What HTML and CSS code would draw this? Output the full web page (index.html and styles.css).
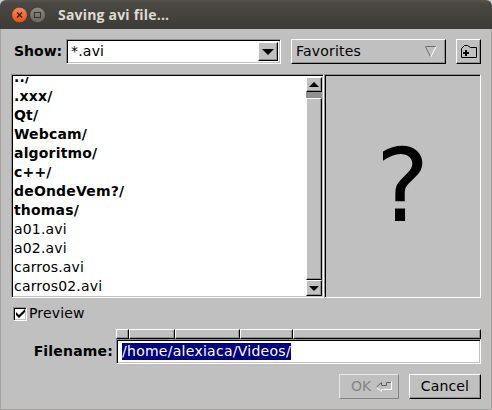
FILE: index.html
```html
<!DOCTYPE html>
<html lang="en">
<head>
<meta charset="utf-8">
<title>Saving avi file...</title>
<link rel="stylesheet" href="styles.css">
</head>
<body>
<div class="window">
  <header class="titlebar">
    <svg class="controls" width="34" height="18" viewBox="0 0 34 18">
      <defs>
        <linearGradient id="close" x1="0" y1="0" x2="0" y2="1"><stop offset="0" stop-color="#f58a62"/><stop offset="1" stop-color="#e8500f"/></linearGradient>
        <linearGradient id="max" x1="0" y1="0" x2="0" y2="1"><stop offset="0" stop-color="#8c8a82"/><stop offset="1" stop-color="#66645d"/></linearGradient>
      </defs>
      <circle cx="8.5" cy="9" r="7.8" fill="url(#close)" stroke="#2d2b27" stroke-width=".5"/>
      <path d="M6 6.500l5 5M11 6.500l-5 5" stroke="#3a1d10" stroke-width="1.2"/>
      <circle cx="26.500" cy="9" r="7.8" fill="url(#max)" stroke="#2d2b27" stroke-width=".5"/>
      <rect x="23.500" y="6.500" width="6" height="5" fill="none" stroke="#34332e"/>
    </svg>
    <h1>Saving avi file...</h1>
  </header>
  <main class="dialog">
    <div class="toolbar">
      <label class="bold show-label">Show:</label>
      <div class="sunken choice">
        <span>*.avi</span>
        <div class="raised drop"><svg width="12" height="6" viewBox="0 0 12 6"><path d="M0 0h12L6 6z"/></svg></div>
      </div>
      <div class="raised favorites">
        <span>Favorites</span>
        <svg width="12" height="12" viewBox="0 0 12 12" fill="none"><path d="M11 .5H.5L5.500 11" stroke="#707070"/><path d="M11.200 .5L5.700 11" stroke="#fff"/></svg>
      </div>
      <div class="raised newdir">
        <svg width="18" height="16" viewBox="0 0 18 16" fill="none" stroke="#000"><path d="M1.500 13.500V4.500L4.500 1.500h3l3 2h6V13.500z" stroke-width="1"/><path d="M6 6v6M3 9h6" stroke-width="2"/></svg>
      </div>
    </div>
    <div class="browser">
      <div class="sunken list">
        <ul class="files">
          <li class="bold">../</li><li class="bold">.xxx/</li><li class="bold">Qt/</li><li class="bold">Webcam/</li>
          <li class="bold">algoritmo/</li><li class="bold">c++/</li><li class="bold">deOndeVem?/</li><li class="bold">thomas/</li>
          <li>a01.avi</li><li>a02.avi</li><li>carros.avi</li><li>carros02.avi</li>
        </ul>
        <div class="scrollbar">
          <div class="raised arrow"><svg width="10" height="5" viewBox="0 0 10 5"><path d="M0 5h10L5 0z"/></svg></div>
          <div class="track"></div>
          <div class="raised thumb"></div>
          <div class="raised arrow"><svg width="10" height="5" viewBox="0 0 10 5"><path d="M0 0h10L5 5z"/></svg></div>
        </div>
      </div>
      <div class="sunken preview"><span>?</span></div>
    </div>
    <label class="check">
      <span class="sunken box"><svg width="9" height="9" viewBox="0 0 9 9"><path d="M0 3l3 3 6-6v3L3 9 0 6z"/></svg></span>
      <span>Preview</span>
    </label>
    <div class="filename">
      <label class="bold file-label">Filename:</label>
      <div class="field">
        <div class="path"><i class="raised p1"></i><i class="raised p2"></i><i class="raised p3"></i><i class="raised p4"></i><i class="raised p5"></i></div>
        <div class="sunken input"><span class="selected">/home/alexiaca/Videos/</span></div>
      </div>
    </div>
    <div class="actions">
      <div class="ok"><span>OK</span>
        <svg width="16" height="11" viewBox="0 0 16 11" fill="none"><path d="M.5 6.500L5.500 10.500V8.500H15.500V.5M9.500 4.500H5.500" stroke="#fff"/><path d="M.5 6L5.500 1.500V4.500H10.500V1.500H15" stroke="#606060"/></svg>
      </div>
      <div class="raised cancel">Cancel</div>
    </div>
  </main>
</div>
</body>
</html>
```

FILE: styles.css
```css
* { box-sizing: border-box; }
body {
  margin: 0;
  background: #c9cfcf;
  font: 14px/19px "DejaVu Sans", sans-serif;
  color: #000;
}
svg { display: block; flex: none; }
.bold { font-weight: bold; }
.window {
  width: 492px;
  height: 410px;
  overflow: hidden;
  border-radius: 6px 6px 0 0;
  background: #c0c0c0;
}
.titlebar {
  height: 29px;
  display: flex;
  align-items: center;
  padding-left: 11px;
  background: linear-gradient(#57554d 0, #4a4842 3px, #3c3b37 100%);
}
.titlebar h1 {
  margin: 0 0 0 13px;
  font: bold 14px/20px "Open Sans", "Noto Sans", sans-serif;
  letter-spacing: .2px;
  color: #dfdbd2;
}
.dialog {
  height: 381px;
  padding: 10px 10px 0;
  border: solid #a5a19e;
  border-width: 0 1px 1px;
}
.raised {
  background: #c0c0c0;
  border: 1px solid;
  border-color: #fff #000 #000 #fff;
  box-shadow: inset -1px -1px #909090;
}
.sunken {
  border: 1px solid;
  border-color: #909090 #fff #fff #909090;
  box-shadow: inset 1px 1px #000, inset -1px -1px #c0c0c0;
}
.toolbar { display: flex; height: 25px; }
.show-label { width: 55px; padding: 3px 0 0 3px; }
.choice {
  width: 215px;
  padding: 2px;
  display: flex;
  justify-content: space-between;
  background: #fff;
}
.choice > span { padding-left: 2px; line-height: 19px; letter-spacing: .2px; }
.drop { width: 20px; display: grid; place-items: center; }
.favorites {
  width: 155px;
  margin: 0 10px;
  padding: 0 8px 0 4px;
  display: flex;
  align-items: center;
  justify-content: space-between;
}
.favorites span { letter-spacing: .2px; }
.newdir { width: 25px; display: grid; place-items: center; }
.browser { display: flex; height: 224px; margin-top: 10px; }
.list {
  width: 313px;
  padding: 2px 1px 1px 2px;
  display: flex;
  background: #fff;
}
.files {
  flex: 1;
  height: 219px;
  margin: 0;
  padding: 0;
  overflow: hidden;
  list-style: none;
  letter-spacing: .18px;
}
.files li { height: 19px; }
.files li:first-child { margin-top: -9px; }
.scrollbar { width: 16px; display: flex; flex-direction: column; }
.arrow { height: 16px; display: grid; place-items: center; }
.arrow:first-child { height: 15px; }
.track { height: 6px; background: #909090; }
.thumb { flex: 1; }
.preview {
  width: 157px;
  display: flex;
  justify-content: center;
}
.preview span { font-size: 101px; line-height: 222px; }
.check { display: flex; align-items: center; height: 19px; margin: 6px 0 0 2px; letter-spacing: .15px; }
.box {
  width: 14px;
  height: 14px;
  margin-right: 2px;
  display: grid;
  place-items: center;
  background: #fff;
}
.filename { display: flex; margin-top: 6px; height: 35px; }
.file-label { width: 105px; padding: 13px 3px 0 0; text-align: right; letter-spacing: .18px; }
.field { width: 365px; }
.path { display: flex; height: 10px; }
.p1 { width: 13px; }
.p2 { width: 46px; }
.p3 { width: 65px; }
.p4 { width: 53px; }
.p5 { flex: 1; }
.input { height: 25px; padding: 3px 5px; display: flex; background: #fff; }
.selected { height: 17px; line-height: 16px; letter-spacing: .27px; background: #000080; color: #fff; }
.actions { display: flex; justify-content: flex-end; gap: 10px; margin-top: 10px; height: 25px; }
.ok {
  width: 60px;
  padding: 0 6px 0 11px;
  display: flex;
  align-items: center;
  justify-content: space-between;
  color: #858585;
  border: 1px solid;
  border-color: #e8e8e8 #858585 #858585 #e8e8e8;
}
.cancel { width: 72px; display: grid; place-items: center; letter-spacing: .15px; }
```
